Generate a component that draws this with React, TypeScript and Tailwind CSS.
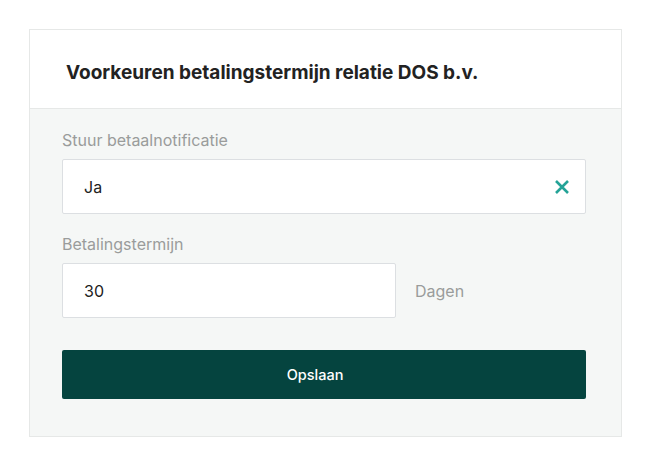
export default function App() {
  return (
    <div className="min-h-[470px] w-[650px] bg-white pt-[29px] pl-[29px] font-['Inter',sans-serif]">
      <div className="w-[593px] border border-[#e6e8e7] bg-[#f5f7f6]">
        <div className="flex h-[79px] items-start border-b border-[#e6e8e7] bg-white pl-9 pt-[29px]">
          <h1 className="text-[19px] leading-[28px] font-bold text-[#222]">Voorkeuren betalingstermijn relatie DOS b.v.</h1>
        </div>
        <div className="px-8 pt-[19px] pb-[37px]">
          <div className="text-[16px] leading-[24px] text-[#9a9c9b]">Stuur betaalnotificatie</div>
          <div className="mt-[7px] flex h-[55px] w-[524px] items-center justify-between rounded-[2px] border border-[#dcdfe2] bg-white pl-[21px] pr-[15px]">
            <span className="text-[16px] text-[#222]">Ja</span>
            <svg width="16" height="16" viewBox="0 0 16 16" className="text-[#24a397]">
              <path d="M2 2 L14 14 M14 2 L2 14" stroke="currentColor" strokeWidth="2.6" strokeLinecap="butt" />
            </svg>
          </div>
          <div className="mt-[18px] text-[16px] leading-[24px] text-[#9a9c9b]">Betalingstermijn</div>
          <div className="mt-[7px] flex items-center gap-[19px]">
            <div className="flex h-[55px] w-[334px] items-center rounded-[2px] border border-[#dcdfe2] bg-white pl-[21px]">
              <span className="text-[16px] text-[#222]">30</span>
            </div>
            <span className="text-[16px] text-[#9a9c9b]">Dagen</span>
          </div>
          <button className="mt-8 flex h-[49px] w-[524px] items-center justify-center rounded-[2px] bg-[#05443f] pr-[18px] text-[14.5px] font-medium text-white">
            Opslaan
          </button>
        </div>
      </div>
    </div>
  );
}
